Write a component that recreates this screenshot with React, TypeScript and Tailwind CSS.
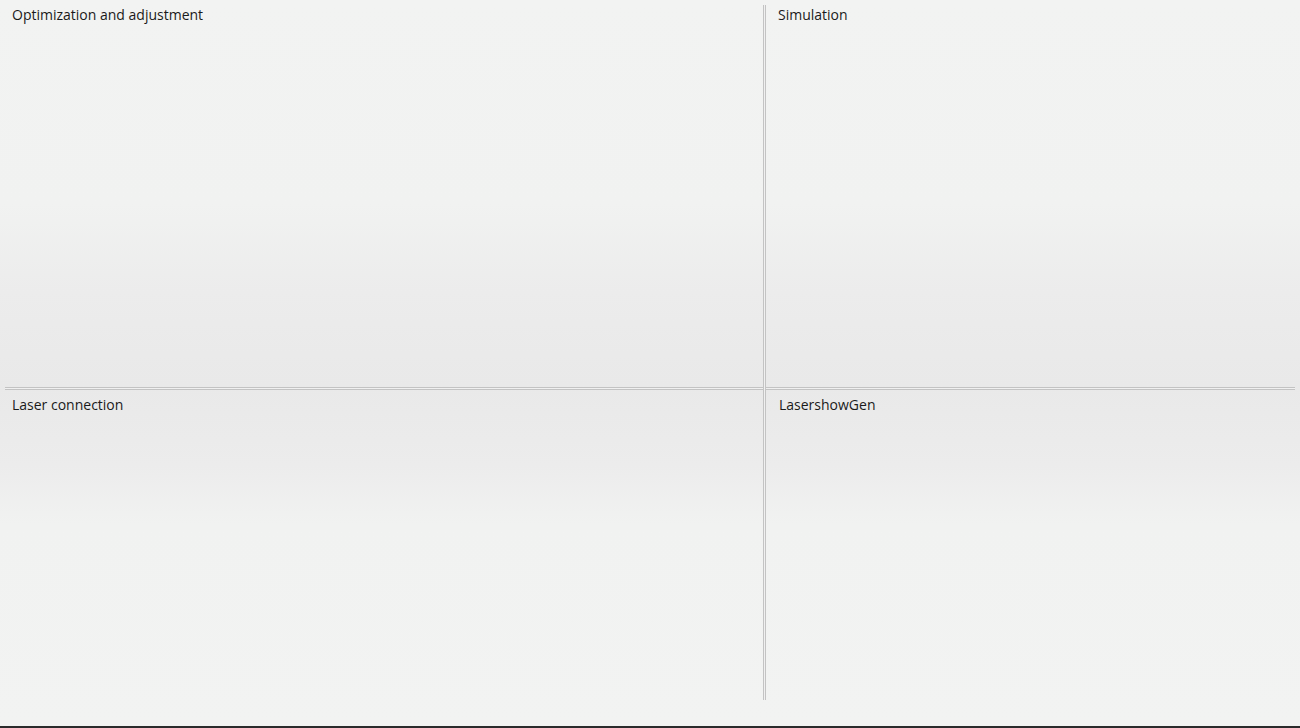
import React from "react";

function Panel({ title, className = "" }: { title: string; className?: string }) {
  return (
    <div className={"relative " + className}>
      <div className="text-[14px] leading-[20px] text-[#1a1a1a]">{title}</div>
    </div>
  );
}

export default function App() {
  return (
    <div
      className="w-[1300px] h-[728px] flex flex-col overflow-hidden bg-[linear-gradient(to_bottom,#f2f3f2_0%,#f1f2f1_28%,#ececec_40%,#e9e9e9_53%,#ececec_64%,#f1f2f1_72%,#f2f3f2_100%)]"
      style={{ fontFamily: '"Open Sans", "Noto Sans", sans-serif' }}
    >
      <div className="flex-1 px-[5px] pt-[5px] flex flex-col">
        <div className="grid grid-cols-[758px_3px_1fr] grid-rows-[382px_3px_310px]">
          <Panel title="Optimization and adjustment" className="pl-[7px] pt-0">
            <div className="absolute left-[15px] top-[297px] text-[8px] leading-none text-[#dadada] tracking-[2px]">
              · · ·&nbsp;&nbsp;&nbsp;&nbsp;· · · ·
            </div>
          </Panel>
          <div className="row-span-3 border-x border-[#c3c3c3] bg-[#f0f0f0]" />
          <Panel title="Simulation" className="pl-[12px] pt-0" />
          <div className="border-y border-[#c3c3c3] bg-[#f0f0f0]" />
          <div className="border-y border-[#c3c3c3] bg-[#f0f0f0]" />
          <Panel title="Laser connection" className="pl-[7px] pt-[5px]" />
          <Panel title="LasershowGen" className="pl-[13px] pt-[5px]" />
        </div>
      </div>
      <div className="h-[2px] bg-[#2b2b2b]" />
    </div>
  );
}
